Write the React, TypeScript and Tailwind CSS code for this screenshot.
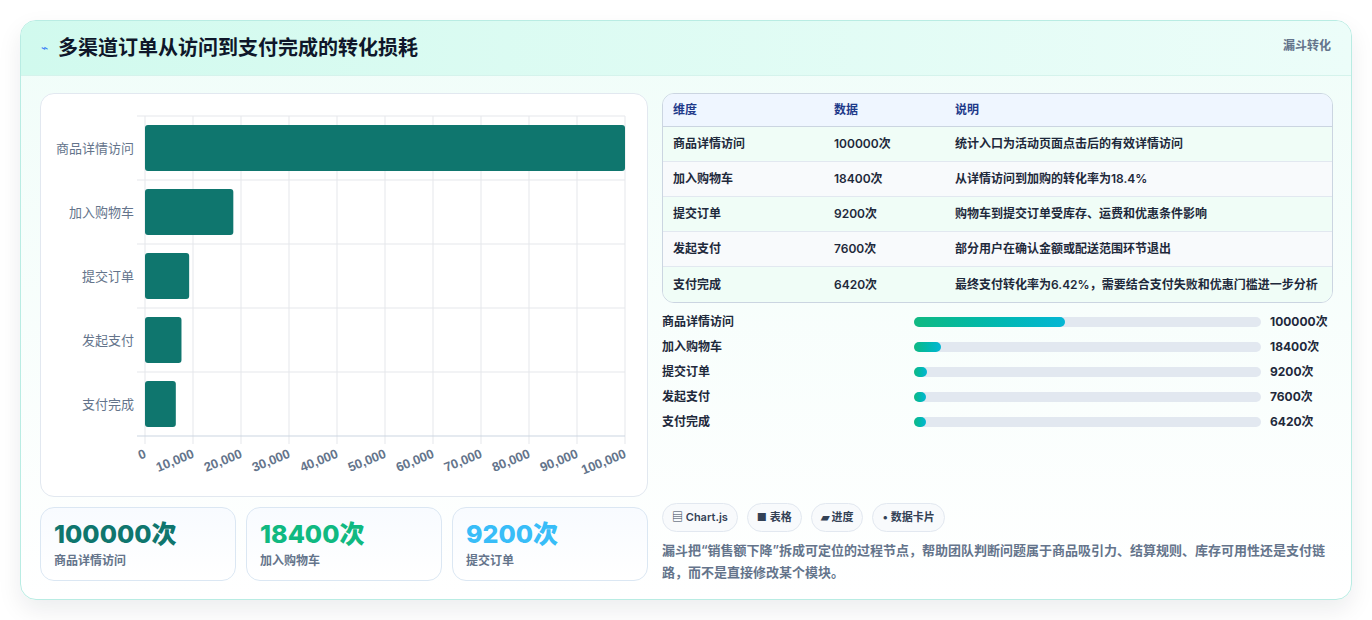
import React from "react";

const rows = [
  ["商品详情访问", "100000次", "统计入口为活动页面点击后的有效详情访问"],
  ["加入购物车", "18400次", "从详情访问到加购的转化率为18.4%"],
  ["提交订单", "9200次", "购物车到提交订单受库存、运费和优惠条件影响"],
  ["发起支付", "7600次", "部分用户在确认金额或配送范围环节退出"],
  ["支付完成", "6420次", "最终支付转化率为6.42%，需要结合支付失败和优惠门槛进一步分析"],
];
const prog = [["商品详情访问", 151, "100000次"], ["加入购物车", 27, "18400次"], ["提交订单", 13, "9200次"], ["发起支付", 12, "7600次"], ["支付完成", 12, "6420次"]] as const;
const vals = [100000, 18400, 9200, 7600, 6420];
const labels = ["商品详情访问", "加入购物车", "提交订单", "发起支付", "支付完成"];

function Chart() {
  const x0 = 104, x1 = 584, y0 = 22, rh = 64;
  const ticks = Array.from({ length: 11 }, (_, i) => i * 10000);
  return (
    <svg width="607" height="403" className="block">
      {ticks.map((t, i) => {
        const x = x0 + (i * (x1 - x0)) / 10;
        return (
          <g key={i}>
            <line x1={x} y1={y0} x2={x} y2={y0 + 5 * rh + 8} stroke="#e5e7eb" />
            <text x={x + 2} y={y0 + 5 * rh + 21} transform={`rotate(-22 ${x + 2} ${y0 + 5 * rh + 21})`} textAnchor="end" fontSize="13" fontWeight="700" fill="#64748b" fontFamily="Liberation Sans, Arial, sans-serif">
              {t === 0 ? "0" : t.toLocaleString("en-US")}
            </text>
          </g>
        );
      })}
      {[0, 1, 2, 3, 4, 5].map((i) => (
        <line key={i} x1={x0 - 8} x2={x1} y1={y0 + i * rh} y2={y0 + i * rh} stroke={i === 5 ? "#cbd5e1" : "#e5e7eb"} />
      ))}
      {vals.map((v, i) => (
        <g key={i}>
          <rect x={x0} y={y0 + i * rh + 9} width={(v / 100000) * (x1 - x0)} height={46} rx={3} fill="#0f766e" />
          <text x={x0 - 11} y={y0 + i * rh + 37} textAnchor="end" fontSize="13" fill="#64748b" fontFamily="Noto Sans CJK SC, sans-serif">{labels[i]}</text>
        </g>
      ))}
    </svg>
  );
}

export default function App() {
  return (
    <div className="w-[1372px] h-[620px] bg-white p-[20px] pb-[20px]" style={{ fontFamily: "Inter, 'Noto Sans CJK SC', sans-serif" }}>
      <div className="h-[580px] rounded-[16px] border border-[#b9ece3] bg-gradient-to-b from-[#f0fdf9] to-white shadow-[0_10px_25px_rgba(15,23,42,0.08)] overflow-hidden">
        <div className="h-[55px] flex items-center justify-between pl-[20px] pr-[20px] bg-gradient-to-r from-[#d1faee] to-[#ecfdf9] border-b border-[#d5f3ec]">
          <div className="flex items-center gap-[10px]">
            <span className="text-[#3b82f6] text-[12px]">⌁</span>
            <h1 className="text-[20px] font-bold text-[#0f172a]">多渠道订单从访问到支付完成的转化损耗</h1>
          </div>
          <span className="text-[12px] font-bold text-[#64748b] self-start mt-[16px]">漏斗转化</span>
        </div>
        <div className="flex gap-[14px] pl-[19px] pr-[18px] pt-[17px]">
          <div className="w-[608px] flex flex-col gap-[10px]">
            <div className="h-[404px] rounded-[14px] border border-[#e2e8f0] bg-white overflow-hidden"><Chart /></div>
            <div className="grid grid-cols-3 gap-[10px]">
              {[["100000次", "text-[#0f766e]", "商品详情访问"], ["18400次", "text-[#10b981]", "加入购物车"], ["9200次", "text-[#38bdf8]", "提交订单"]].map(([v, c, l]) => (
                <div key={l} className="h-[74px] rounded-[14px] border border-[#dbe7f3] bg-gradient-to-b from-[#f8fbff] to-white px-[13px] pt-[10px]">
                  <div className={`text-[25px] font-extrabold leading-[32px] ${c}`}>{v}</div>
                  <div className="text-[12px] font-semibold text-[#64748b] mt-[2px]">{l}</div>
                </div>
              ))}
            </div>
          </div>
          <div className="flex-1 flex flex-col">
            <div className="rounded-[12px] border border-[#cbd5e1] overflow-hidden text-[12px] font-semibold text-[#1e293b]">
              <div className="h-[33px] flex items-center bg-[#eff6ff] text-[#1e3a8a] border-b border-[#cbd5e1]">
                <div className="w-[171px] pl-[10px]">维度</div><div className="w-[121px]">数据</div><div>说明</div>
              </div>
              {rows.map((r, i) => (
                <div key={i} className={`h-[35px] flex items-center ${i % 2 ? "bg-[#f8fafc]" : "bg-[#f0fdf7]"} ${i < 4 ? "border-b border-[#e2e8f0]" : ""}`}>
                  <div className="w-[171px] pl-[10px]">{r[0]}</div><div className="w-[121px]">{r[1]}</div><div>{r[2]}</div>
                </div>
              ))}
            </div>
            <div className="mt-[12px] flex flex-col gap-[11px]">
              {prog.map(([l, w, v]) => (
                <div key={l} className="h-[14px] flex items-center text-[12px] font-semibold text-[#1e293b]">
                  <div className="w-[252px]">{l}</div>
                  <div className="w-[347px] h-[10px] rounded-full bg-[#e2e8f0]">
                    <div className="h-full rounded-full bg-gradient-to-r from-[#10b981] to-[#06b6d4]" style={{ width: w }} />
                  </div>
                  <div className="ml-[9px] font-bold">{v}</div>
                </div>
              ))}
            </div>
            <div className="mt-[74px] flex gap-[9px] text-[11px] font-semibold text-[#334155]">
              {["▤ Chart.js", "■ 表格", "▰ 进度", "• 数据卡片"].map((t) => (
                <span key={t} className="h-[29px] px-[9px] flex items-center rounded-full border border-[#e2e8f0] bg-[#f8fafc]">{t}</span>
              ))}
            </div>
            <p className="mt-[7px] text-[13px] leading-[22px] font-semibold text-[#64748b]">漏斗把“销售额下降”拆成可定位的过程节点，帮助团队判断问题属于商品吸引力、结算规则、库存可用性还是支付链路，而不是直接修改某个模块。</p>
          </div>
        </div>
      </div>
    </div>
  );
}
